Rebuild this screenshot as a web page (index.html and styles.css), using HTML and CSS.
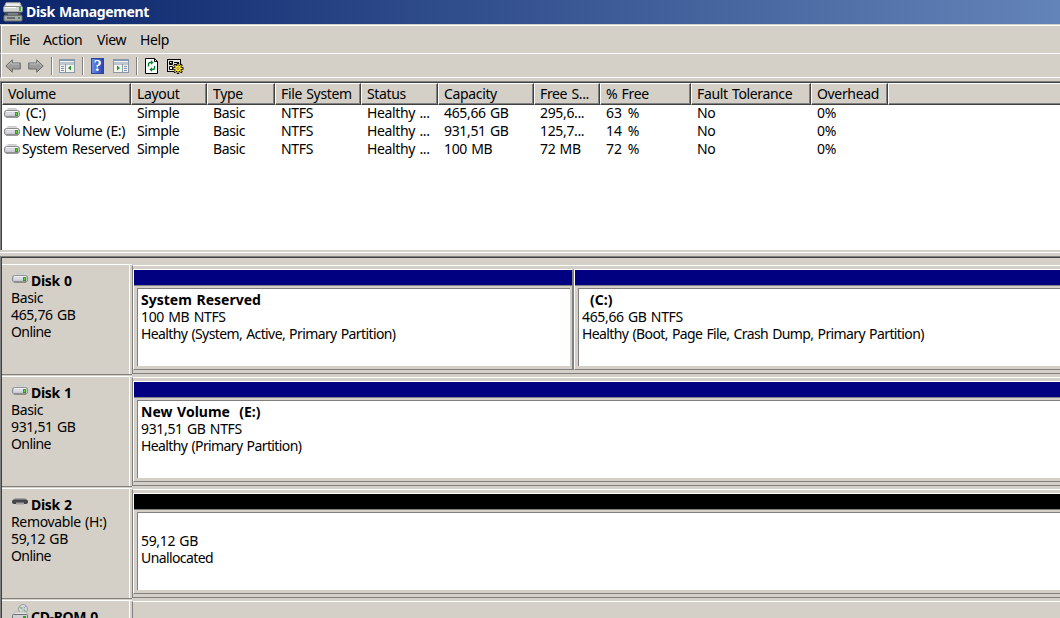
FILE: index.html
```
<!DOCTYPE html>
<html lang="en">
<head>
  <meta charset="UTF-8" />
  <meta name="viewport" content="width=device-width, initial-scale=1.0"/>
  <title>Disk Management</title>
  <link rel="stylesheet" href="styles.css">
</head>
<body>
  <svg class="symbols" width="0" height="0">
    <symbol id="drive" viewBox="0 0 16 10">
      <path d="M3.500 .5h9L15 4H1z" fill="#dddde0"/>
      <path d="M3.500 .7h9" stroke="#c4c4c8"/>
      <rect x=".5" y="2.500" width="15" height="6.500" rx="2" fill="#c9c9d4" stroke="#8c8c90"/>
      <path d="M2 3.500h12" stroke="#f8f8fa"/>
      <path d="M2 5.500h9" stroke="#dedee8" stroke-width="2"/>
      <path d="M2 9h12" stroke="#707074"/>
      <rect x="11" y="4" width="3" height="4" fill="#3c9a24"/>
      <rect x="12" y="5" width="1" height="2" fill="#5ee030"/>
    </symbol>
    <symbol id="arrow" viewBox="0 0 16 14">
      <path d="M.8 7L7.300 .8V4h8v6h-8v3.200z" fill="#9c9c9c" stroke="#6a6a6a"/>
      <path d="M2.300 7L6.500 3v2h7.800" fill="none" stroke="#c0c0c0"/>
    </symbol>
    <symbol id="pane" viewBox="0 0 16 14">
      <rect x=".5" y=".5" width="15" height="13" fill="#f3f3ef" stroke="#8b98a8"/>
      <path d="M1 1.500h14" stroke="#8298b4"/>
      <path d="M1 3.500h14" stroke="#b7c4d2"/>
      <path d="M1 5h14M6.500 5v8" stroke="#8b98a8"/>
      <path d="M2 7.500h3M2 9.500h3M2 11.500h3" stroke="#7b93b3"/>
    </symbol>
  </svg>

  <div class="title-bar">
    <svg class="title-icon" viewBox="0 0 20 20">
      <path d="M3 .8h14l2 5H1z" fill="#eeeeec" stroke="#aaa"/>
      <rect x=".5" y="4.500" width="19" height="5.500" rx="1" fill="#d4d6d6" stroke="#8a8a8a"/>
      <path d="M2 5.500h11" stroke="#fff"/>
      <rect x="16" y="5" width="2" height="4" fill="#48b438"/>
      <path d="M3 10h14l2 4H1z" fill="#4b5157"/>
      <path d="M5 12h10" stroke="#a8b0b0"/>
      <rect x="1" y="13.500" width="18" height="5.500" rx="1" fill="#a5aaa8" stroke="#686c6c"/>
      <path d="M4 16h8" stroke="#50585c" stroke-width="1.500"/>
      <rect x="15" y="15" width="2" height="2" fill="#388c58"/>
    </svg>
    <h1>Disk Management</h1>
  </div>

  <div class="menu">
    <span class="file">File</span>
    <span class="action">Action</span>
    <span class="view">View</span>
    <span>Help</span>
  </div>

  <div class="toolbar">
    <svg class="arrow" width="16" height="14"><use href="#arrow"/></svg>
    <svg class="arrow forward" width="16" height="14"><use href="#arrow"/></svg>
    <i class="sep"></i>
    <svg class="pane-icon" width="16" height="14"><use href="#pane"/><path d="M12 6.500v5L9 9z" fill="#25922b"/></svg>
    <i class="sep wide"></i>
    <span class="help-icon">?</span>
    <svg class="pane-icon flip" width="16" height="14"><use href="#pane"/><path d="M12 6.500v5L9 9z" fill="#25922b"/></svg>
    <i class="sep wide"></i>
    <svg class="refresh" width="13" height="16" viewBox="0 0 13 16">
      <path d="M.5 .5h9l3 3v12H.5z" fill="#fff" stroke="#000"/>
      <path d="M9.500 .5v3h3" fill="none" stroke="#000"/>
      <path d="M3.500 8.500V6.500q0-2 2-2h1M9.500 8v2q0 1.500-2 1.500h-1" fill="none" stroke="#0a8432" stroke-width="1.400"/>
      <path d="M6 2.200v4.600l2.600-2.300zM7 9.200v4.600l-2.600-2.300z" fill="#0a8432"/>
    </svg>
    <svg width="17" height="16" viewBox="0 0 17 16">
      <rect x=".5" y="1.500" width="13" height="12" fill="#e8e6dc" stroke="#000"/>
      <path d="M2.500 3.500h3v3h-3zM2.500 8.500h3v3h-3z" fill="#fff" stroke="#000"/>
      <path d="M7 4.500h5M7 6.500h3M3 5l1 1 2-3" fill="none" stroke="#000"/>
      <path d="M11 5v11M5.500 10.500h11M7 6.500l8 8M15 6.500l-8 8" stroke="#000" stroke-width="2.400"/>
      <path d="M11 6v9M6.500 10.500h9M7.700 7.200l6.600 6.600M14.300 7.200l-6.600 6.600" stroke="#ffe52a" stroke-width="1.200"/>
      <circle cx="11" cy="10.500" r="2.800" fill="#ffe52a"/>
      <circle cx="11" cy="10.500" r="1" fill="#fff" stroke="#655b00" stroke-width=".7"/>
    </svg>
  </div>

  <div class="volumes">
    <div class="row head">
      <span>Volume</span><span>Layout</span><span>Type</span><span>File System</span><span>Status</span>
      <span>Capacity</span><span>Free S...</span><span>% Free</span><span>Fault Tolerance</span><span>Overhead</span><span></span>
    </div>
    <div class="row">
      <span class="name"><svg width="16" height="10"><use href="#drive"/></svg><b class="indent">(C:)</b></span><span>Simple</span><span>Basic</span><span>NTFS</span><span>Healthy ...</span>
      <span>465,66 GB</span><span>295,6...</span><span class="percent">63 %</span><span>No</span><span>0%</span>
    </div>
    <div class="row">
      <span class="name"><svg width="16" height="10"><use href="#drive"/></svg><b>New Volume (E:)</b></span><span>Simple</span><span>Basic</span><span>NTFS</span><span>Healthy ...</span>
      <span>931,51 GB</span><span>125,7...</span><span class="percent">14 %</span><span>No</span><span>0%</span>
    </div>
    <div class="row">
      <span class="name"><svg width="16" height="10"><use href="#drive"/></svg><b>System Reserved</b></span><span>Simple</span><span>Basic</span><span>NTFS</span><span>Healthy ...</span>
      <span>100 MB</span><span>72 MB</span><span class="percent">72 %</span><span>No</span><span>0%</span>
    </div>
  </div>

  <div class="splitter"></div>

  <div class="disks">
    <div class="disk">
      <div class="disk-label">
        <h2><svg width="16" height="10"><use href="#drive"/></svg>Disk 0</h2>
        <p>Basic</p><p>465,76 GB</p><p class="status">Online</p>
      </div>
      <div class="disk-map">
        <div class="partition first">
          <div class="bar"></div>
          <div class="info">
            <h3>System Reserved</h3><p>100 MB NTFS</p><p class="status">Healthy (System, Active, Primary Partition)</p>
          </div>
        </div>
        <div class="partition">
          <div class="bar"></div>
          <div class="info">
            <h3 class="no-name">(C:)</h3><p>465,66 GB NTFS</p><p class="status">Healthy (Boot, Page File, Crash Dump, Primary Partition)</p>
          </div>
        </div>
      </div>
    </div>
    <div class="disk">
      <div class="disk-label">
        <h2><svg width="16" height="10"><use href="#drive"/></svg>Disk 1</h2>
        <p>Basic</p><p>931,51 GB</p><p class="status">Online</p>
      </div>
      <div class="disk-map">
        <div class="partition">
          <div class="bar"></div>
          <div class="info">
            <h3>New Volume&nbsp; (E:)</h3><p>931,51 GB NTFS</p><p class="status">Healthy (Primary Partition)</p>
          </div>
        </div>
      </div>
    </div>
    <div class="disk">
      <div class="disk-label">
        <h2><svg width="16" height="10" viewBox="0 0 16 10"><path d="M3 1h10l2 2H1z" fill="#a2a2a4"/><rect y="2.500" width="16" height="4.500" rx="2" fill="#46464a"/><path d="M4 6.500h8" stroke="#a2a2a6" stroke-width="2"/></svg>Disk 2</h2>
        <p>Removable (H:)</p><p>59,12 GB</p><p class="status">Online</p>
      </div>
      <div class="disk-map">
        <div class="partition">
          <div class="bar unallocated"></div>
          <div class="info">
            <h3></h3><p>59,12 GB</p><p class="status">Unallocated</p>
          </div>
        </div>
      </div>
    </div>
    <div class="disk">
      <div class="disk-label">
        <h2 class="cdrom"><svg width="17" height="17" viewBox="0 0 17 17"><circle cx="11" cy="5" r="4.500" fill="#dcdce2" stroke="#9a9aa0"/><path d="M11 5L7.500 3M11 5l3 3" stroke="#79c77b" stroke-width="1.500"/><path d="M11 5l3-3" stroke="#b18ac8"/><circle cx="11" cy="5" r="1.200" fill="#fff" stroke="#888" stroke-width=".6"/><path d="M3 8h11l2 3H1z" fill="#e6e6e6" stroke="#aaa" stroke-width=".7"/><rect x=".5" y="10.500" width="15" height="5" rx="1" fill="#d0d0d3" stroke="#707074"/><rect x="11" y="12" width="3" height="2" fill="#2aa61d"/></svg>CD-ROM 0</h2>
      </div>
      <div class="disk-map"></div>
    </div>
  </div>
</body>
</html>
```
FILE: styles.css
```
* {
  box-sizing: border-box;
}

body {
  margin: 0;
  height: 618px;
  overflow: hidden;
  background: #d4d0c8;
  color: #000;
  font-family: "Noto Sans", sans-serif;
  font-size: 14px;
  line-height: 17px;
  letter-spacing: -0.35px;
  word-spacing: 1px;
}

h1, h2, h3, p {
  margin: 0;
  font-size: 14px;
}

b {
  font-weight: normal;
}

svg {
  display: block;
  flex: none;
}

.symbols {
  display: none;
}

.title-bar {
  display: flex;
  align-items: center;
  height: 24px;
  padding-left: 3px;
  background: linear-gradient(to right, #0a246a, #6384b8);
  color: #fff;
}

.title-bar h1 {
  padding-bottom: 2px;
}

.title-icon {
  width: 20px;
  height: 20px;
  margin-right: 3px;
}

.menu {
  display: flex;
  align-items: center;
  height: 29px;
  margin-top: 1px;
  padding-left: 8px;
  border-top: 1px solid #fff;
  border-left: 1px solid #808080;
  border-bottom: 1px solid #fff;
  box-shadow: inset 1px 0 #fff;
}

.menu .file {
  width: 34px;
}

.menu .action {
  width: 54px;
}

.menu .view {
  width: 43px;
}

.toolbar {
  display: flex;
  align-items: center;
  height: 24px;
  padding-left: 4px;
  border-left: 1px solid #808080;
  border-bottom: 1px solid #fff;
  box-shadow: inset 1px 0 #fff;
}

.arrow {
  margin-right: 7px;
}

.forward {
  transform: scaleX(-1);
}

.sep {
  width: 2px;
  height: 18px;
  margin-right: 6px;
  border-left: 1px solid #808080;
  border-right: 1px solid #fff;
}

.wide {
  margin-right: 7px;
}

.pane-icon {
  margin-right: 7px;
}

.flip {
  transform: scaleX(-1);
}

.help-icon {
  width: 13px;
  height: 16px;
  margin-right: 9px;
  background: linear-gradient(to right, #6b8ce8, #2546ae);
  border: 1px solid #2c4698;
  color: #fff;
  font-family: "Liberation Serif", serif;
  font-size: 16px;
  font-weight: bold;
  line-height: 14px;
  text-align: center;
}

.refresh {
  margin-right: 9px;
}

.volumes {
  height: 169px;
  margin-top: 3px;
  border-top: 1px solid #808080;
  border-left: 1px solid #808080;
  background: #fff;
  box-shadow: inset 1px 1px #404040;
  padding: 1px 0 0 1px;
}

.row {
  display: grid;
  grid-template-columns: 129px 76px 68px 86px 77px 96px 66px 91px 120px 77px 1fr;
  height: 18px;
  line-height: 18px;
  white-space: nowrap;
}

.row span {
  padding-left: 6px;
}

.head {
  height: 21px;
  line-height: 20px;
}

.head span {
  background: #d4d0c8;
  border-top: 1px solid #fff;
  border-left: 1px solid #fff;
  border-right: 1px solid #404040;
  border-bottom: 1px solid #404040;
  box-shadow: inset -1px -1px #808080;
  padding-left: 5px;
}

.head span:last-child {
  border-right: none;
  box-shadow: inset 0 -1px #808080;
}

.row .name {
  display: flex;
  padding-left: 2px;
}

.name svg {
  margin-top: 4px;
}

.name b {
  margin-left: 2px;
}

.name .indent {
  margin-left: 6px;
}

.percent {
  letter-spacing: 0;
  word-spacing: 2px;
}

.splitter {
  height: 6px;
  border-top: 2px solid #d4d0c8;
  box-shadow: inset 0 1px #fff;
}

.disks {
  height: 362px;
  overflow: hidden;
  border-top: 1px solid #808080;
  border-left: 1px solid #808080;
  box-shadow: inset 1px 1px #404040;
  padding: 7px 0 0 1px;
}

.disk {
  display: flex;
  height: 112px;
}

.disk-label {
  width: 130px;
  height: 111px;
  padding: 7px 0 0 9px;
  border-top: 1px solid #fff;
  border-bottom: 1px solid #808080;
  box-shadow: inset -2px 0 #d4d0c8, inset -3px 0 #fff;
}

.disk-label h2 {
  display: flex;
  height: 17px;
  line-height: 18px;
}

.disk-label h2 svg {
  margin-top: 1px;
  margin-right: 3px;
  margin-left: 1px;
}

.disk-label .cdrom svg {
  margin-top: -4px;
  margin-right: 2px;
}

.disk-map {
  display: flex;
  flex: 1;
  height: 109px;
  margin-top: 1px;
  padding: 3px 0;
  border-top: 1px solid #fff;
  border-left: 1px solid #808080;
  border-bottom: 1px solid #808080;
}

.partition {
  flex: 1;
  height: 101px;
  border-top: 1px solid #fff;
  border-left: 1px solid #fff;
  border-bottom: 1px solid #808080;
}

.first {
  flex: none;
  width: 441px;
  border-right: 2px solid #808080;
}

.bar {
  height: 16px;
  background: #000080;
  border-bottom: 1px solid #808080;
}

.unallocated {
  background: #000;
}

.info {
  height: 78px;
  margin: 2px 0 0 3px;
  padding: 2px 0 0 3px;
  border-top: 1px solid #808080;
  border-left: 1px solid #808080;
  background: #fff;
  white-space: nowrap;
}

.first .info {
  margin-right: 2px;
}

.status {
  letter-spacing: -0.6px;
}

.info h3 {
  height: 17px;
  letter-spacing: 0;
}

.info .no-name {
  padding-left: 8px;
}
```
